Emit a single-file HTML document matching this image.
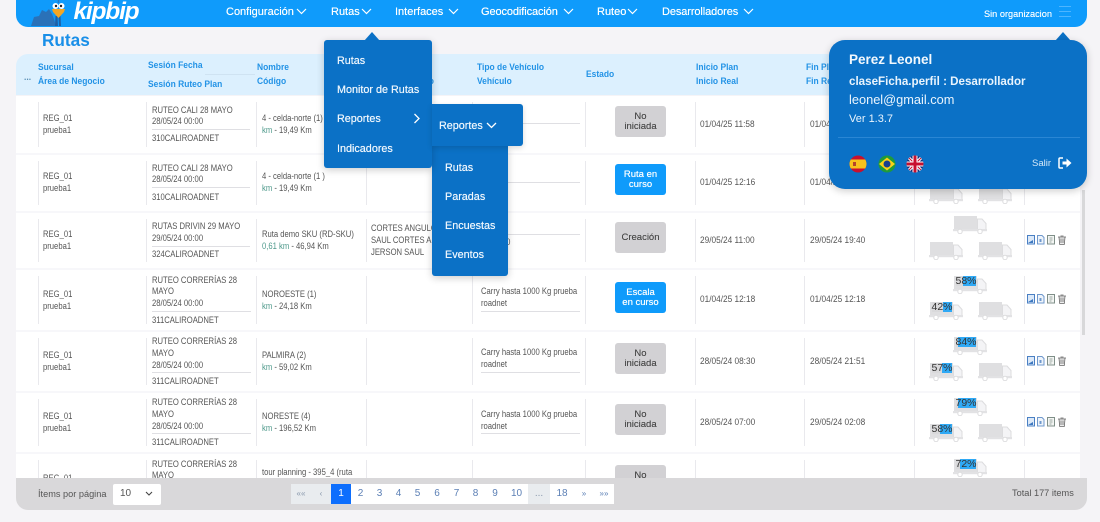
<!DOCTYPE html>
<html lang="es"><head><meta charset="utf-8"><title>Rutas</title>
<style>
*{box-sizing:border-box}
html,body{margin:0;padding:0;width:1100px;height:522px;overflow:hidden;background:#f5f4f7}
body{font-family:"Liberation Sans",sans-serif;position:relative;filter:blur(.35px)}
.t{position:absolute;white-space:nowrap;line-height:12px}
.h{font-size:9px;font-weight:bold;color:#2393e6;transform:scaleX(.94);transform-origin:left center}
.c{font-size:8.8px;color:#555;transform:scaleX(.87);transform-origin:left center}
.d{transform:scaleX(.94)}
.g{color:#4f9a8c}
.row{position:absolute;left:16px;width:1064px;background-color:#fff;background-repeat:no-repeat;
background-image:linear-gradient(#e9e9ed,#e9e9ed),linear-gradient(#e9e9ed,#e9e9ed),linear-gradient(#e9e9ed,#e9e9ed),linear-gradient(#e9e9ed,#e9e9ed),linear-gradient(#e9e9ed,#e9e9ed),linear-gradient(#e9e9ed,#e9e9ed),linear-gradient(#e9e9ed,#e9e9ed),linear-gradient(#e9e9ed,#e9e9ed),linear-gradient(#e9e9ed,#e9e9ed),linear-gradient(#e9e9ed,#e9e9ed);
background-position:22px 6px,130px 6px,240px 6px,350px 6px,456px 6px,569px 6px,679px 6px,788px 6px,898px 6px,1008px 6px;
background-size:1px calc(100% - 12px)}
.gap{position:absolute;left:16px;width:1064px;height:2px;background:#f7f7fa}
.ln{position:absolute;height:1px;background:#dfdfe3}
.b{position:absolute;left:615px;width:51px;height:31px;border-radius:3px;font-size:9.5px;line-height:9.500px;text-align:center;display:flex;align-items:center;justify-content:center}
.gy{background:#d2d1d4;color:#4a4a4a;text-shadow:0 0 .3px #555}
.bl{background:#0f9bfb;color:#fff;text-shadow:0 0 .5px #fff}
.nav{position:absolute;top:6px;font-size:11px;line-height:12px;color:#fff;white-space:nowrap;text-shadow:0 0 .4px #fff}
.chev{position:absolute;width:12px;height:8px}
.m{position:absolute;font-size:10.8px;line-height:14px;color:#eef6fd;white-space:nowrap;text-shadow:0 0 .5px #fff}
.pn{position:absolute;top:484px;height:20px;background:#fff;color:#5b7fb5;font-size:10px;line-height:20px;text-align:center}
.bar{position:absolute;height:10px;background:#d9d9db}
.bar i{position:absolute;right:0;top:0;height:10px;background:#2fa9f5}
.bar b{position:absolute;left:-2px;right:-2px;top:0;text-align:center;font-size:10.500px;line-height:10px;font-weight:normal;color:#333}
svg{position:absolute}
.tr{width:34px;height:18px}
</style></head><body>
<svg width="0" height="0" style="position:absolute"><defs>
<symbol id="truck" viewBox="0 0 34 18"><rect x="1" y="0" width="23" height="13" fill="#dfdfe1"/><path d="M24.500 3h4.500l4 4.500v6h-8.500z" fill="#f4f4f6" stroke="#dcdcde"/><rect x="0" y="13" width="34" height="2.200" fill="#e2e2e4"/><circle cx="7" cy="15.500" r="2.200" fill="#fff" stroke="#dcdcde"/><circle cx="27" cy="15.500" r="2.200" fill="#fff" stroke="#dcdcde"/></symbol>
<symbol id="ico" viewBox="0 0 40 10"><rect x="1.500" y=".5" width="7" height="8.500" fill="#dce9f8" stroke="#4a80c4"/><path d="M2 8l5-3v3z" fill="#3d78c0"/><path d="M11.500.5h4.500l2 2v6.500h-6.500z" fill="#eef4fb" stroke="#6f98cc"/><rect x="13.500" y="4" width="2" height="3" fill="#6f98cc"/><rect x="21.500" y=".5" width="7" height="8.500" fill="#f3f5f3" stroke="#7f8f88"/><path d="M23.500 3h3M23.500 5h3M23.500 7h2" stroke="#7f8f88" stroke-width=".7"/><path d="M32 2h8M33 2l.7 7.500h4.600l.7-7.500M34.500 1h3M35 3.500v4.500M37 3.500v4.500" fill="#eee" stroke="#666" stroke-width=".8"/></symbol>
</defs></svg>

<!-- table header -->
<div style="position:absolute;left:16px;top:54px;width:1066px;height:41px;background:#dcf0fe;border-top-left-radius:12px"></div>
<div class="t" style="left:42px;top:30px;font-size:17.200px;line-height:20px;font-weight:bold;color:#1a8fe8">Rutas</div>
<div class="t h" style="left:24px;top:71px;color:#5a8fb5">...</div>
<div class="t h" style="left:38px;top:61px">Sucursal</div>
<div class="t h" style="left:38px;top:75px">Área de Negocio</div>
<div class="t h" style="left:148px;top:59px">Sesión Fecha</div>
<div class="ln" style="left:205px;top:74px;width:50px;background:#cfe3f2"></div>
<div class="t h" style="left:148px;top:78px">Sesión Ruteo Plan</div>
<div class="t h" style="left:257px;top:61px">Nombre</div>
<div class="t h" style="left:257px;top:75px">Código</div>
<div class="t h" style="left:402px;top:75px">Técnico</div>
<div class="t h" style="left:477px;top:61px">Tipo de Vehículo</div>
<div class="t h" style="left:477px;top:75px">Vehículo</div>
<div class="t h" style="left:586px;top:68px">Estado</div>
<div class="t h" style="left:696px;top:61px">Inicio Plan</div>
<div class="t h" style="left:696px;top:75px">Inicio Real</div>
<div class="t h" style="left:806px;top:61px">Fin Plan</div>
<div class="t h" style="left:806px;top:75px">Fin Real</div>

<!-- rows -->
<div class="row" style="top:96px;height:57px"></div><div class="gap" style="top:153px"></div>
<div class="row" style="top:155px;height:56px"></div><div class="gap" style="top:211px"></div>
<div class="row" style="top:213px;height:55px"></div><div class="gap" style="top:268px"></div>
<div class="row" style="top:270px;height:60px"></div><div class="gap" style="top:330px"></div>
<div class="row" style="top:332px;height:59px"></div><div class="gap" style="top:391px"></div>
<div class="row" style="top:393px;height:59px"></div><div class="gap" style="top:452px"></div>
<div class="row" style="top:454px;height:30px"></div>
<div style="position:absolute;left:1082px;top:190px;width:3px;height:145px;background:#d8d8da"></div>

<!-- row 1 -->
<div class="t c" style="left:43px;top:112px">REG_01</div><div class="t c" style="left:43px;top:124px">prueba1</div>
<div class="t c" style="left:152px;top:104px">RUTEO CALI 28 MAYO</div><div class="t c" style="left:152px;top:115px">28/05/24 00:00</div>
<div class="ln" style="left:152px;top:129px;width:98px"></div><div class="t c" style="left:152px;top:132px">310CALIROADNET</div>
<div class="t c" style="left:262px;top:112px">4 - celda-norte (1)</div><div class="t c" style="left:262px;top:124px"><span class="g">km</span> - 19,49 Km</div>
<div class="ln" style="left:481px;top:123px;width:99px"></div>
<div class="b gy" style="top:106px">No<br>iniciada</div>
<div class="t c d" style="left:700px;top:118px">01/04/25 11:58</div><div class="t c d" style="left:810px;top:118px">01/04/25 12:10</div>

<!-- row 2 -->
<div class="t c" style="left:43px;top:170px">REG_01</div><div class="t c" style="left:43px;top:182px">prueba1</div>
<div class="t c" style="left:152px;top:162px">RUTEO CALI 28 MAYO</div><div class="t c" style="left:152px;top:173px">28/05/24 00:00</div>
<div class="ln" style="left:152px;top:187px;width:98px"></div><div class="t c" style="left:152px;top:191px">310CALIROADNET</div>
<div class="t c" style="left:262px;top:170px">4 - celda-norte (1 )</div><div class="t c" style="left:262px;top:182px"><span class="g">km</span> - 19,49 Km</div>
<div class="ln" style="left:481px;top:182px;width:99px"></div>
<div class="b bl" style="top:164px">Ruta en<br>curso</div>
<div class="t c d" style="left:700px;top:176px">01/04/25 12:16</div><div class="t c d" style="left:810px;top:176px">01/04/25 12:30</div>
<svg class="tr" style="left:929px;top:186px"><use href="#truck"/></svg><svg class="tr" style="left:978px;top:186px"><use href="#truck"/></svg>

<!-- row 3 -->
<div class="t c" style="left:43px;top:228px">REG_01</div><div class="t c" style="left:43px;top:240px">prueba1</div>
<div class="t c" style="left:152px;top:220px">RUTAS DRIVIN 29 MAYO</div><div class="t c" style="left:152px;top:232px">29/05/24 00:00</div>
<div class="ln" style="left:152px;top:246px;width:98px"></div><div class="t c" style="left:152px;top:248px">324CALIROADNET</div>
<div class="t c" style="left:262px;top:228px">Ruta demo SKU (RD-SKU)</div><div class="t c" style="left:262px;top:240px"><span class="g">0,61 km</span> - 46,94 Km</div>
<div class="t c" style="left:371px;top:222px">CORTES ANGULO</div><div class="t c" style="left:371px;top:234px">SAUL CORTES ANGULO</div><div class="t c" style="left:371px;top:246px">JERSON SAUL</div>
<div class="ln" style="left:481px;top:234px;width:99px"></div><div class="t c" style="left:478px;top:236px">roadnet 0</div>
<div class="b gy" style="top:222px">Creación</div>
<div class="t c d" style="left:700px;top:234px">29/05/24 11:00</div><div class="t c d" style="left:810px;top:234px">29/05/24 19:40</div>
<svg class="tr" style="left:953px;top:216px"><use href="#truck"/></svg><svg class="tr" style="left:929px;top:242px"><use href="#truck"/></svg><svg class="tr" style="left:978px;top:242px"><use href="#truck"/></svg>
<svg style="left:1026px;top:235px" width="40" height="10"><use href="#ico"/></svg>

<!-- row 4 -->
<div class="t c" style="left:43px;top:288px">REG_01</div><div class="t c" style="left:43px;top:300px">prueba1</div>
<div class="t c" style="left:152px;top:274px">RUTEO CORRERÍAS 28</div><div class="t c" style="left:152px;top:285px">MAYO</div><div class="t c" style="left:152px;top:297px">28/05/24 00:00</div>
<div class="ln" style="left:152px;top:311px;width:99px"></div><div class="t c" style="left:152px;top:314px">311CALIROADNET</div>
<div class="t c" style="left:262px;top:288px">NOROESTE (1)</div><div class="t c" style="left:262px;top:300px"><span class="g">km</span> - 24,18 Km</div>
<div class="t c" style="left:481px;top:285px">Carry hasta 1000 Kg prueba</div><div class="t c" style="left:481px;top:297px">roadnet</div><div class="ln" style="left:481px;top:311px;width:99px"></div>
<div class="b bl" style="top:282px">Escala<br>en curso</div>
<div class="t c d" style="left:700px;top:293px">01/04/25 12:18</div><div class="t c d" style="left:810px;top:293px">01/04/25 12:18</div>
<svg class="tr" style="left:953px;top:276px"><use href="#truck"/></svg><svg class="tr" style="left:929px;top:302px"><use href="#truck"/></svg><svg class="tr" style="left:978px;top:302px"><use href="#truck"/></svg>
<div class="bar" style="left:956px;top:276px;width:20px"><i style="width:13px"></i><b>58%</b></div>
<div class="bar" style="left:932px;top:302px;width:20px"><i style="width:9px"></i><b>42%</b></div>
<svg style="left:1026px;top:294px" width="40" height="10"><use href="#ico"/></svg>

<!-- row 5 -->
<div class="t c" style="left:43px;top:349px">REG_01</div><div class="t c" style="left:43px;top:361px">prueba1</div>
<div class="t c" style="left:152px;top:335px">RUTEO CORRERÍAS 28</div><div class="t c" style="left:152px;top:347px">MAYO</div><div class="t c" style="left:152px;top:359px">28/05/24 00:00</div>
<div class="ln" style="left:152px;top:372px;width:99px"></div><div class="t c" style="left:152px;top:375px">311CALIROADNET</div>
<div class="t c" style="left:262px;top:349px">PALMIRA (2)</div><div class="t c" style="left:262px;top:361px"><span class="g">km</span> - 59,02 Km</div>
<div class="t c" style="left:481px;top:346px">Carry hasta 1000 Kg prueba</div><div class="t c" style="left:481px;top:358px">roadnet</div><div class="ln" style="left:481px;top:372px;width:99px"></div>
<div class="b gy" style="top:343px">No<br>iniciada</div>
<div class="t c d" style="left:700px;top:355px">28/05/24 08:30</div><div class="t c d" style="left:810px;top:355px">28/05/24 21:51</div>
<svg class="tr" style="left:953px;top:337px"><use href="#truck"/></svg><svg class="tr" style="left:929px;top:363px"><use href="#truck"/></svg><svg class="tr" style="left:978px;top:363px"><use href="#truck"/></svg>
<div class="bar" style="left:956px;top:337px;width:20px"><i style="width:18px"></i><b>84%</b></div>
<div class="bar" style="left:932px;top:363px;width:20px"><i style="width:10px"></i><b>57%</b></div>
<svg style="left:1026px;top:356px" width="40" height="10"><use href="#ico"/></svg>

<!-- row 6 -->
<div class="t c" style="left:43px;top:410px">REG_01</div><div class="t c" style="left:43px;top:422px">prueba1</div>
<div class="t c" style="left:152px;top:396px">RUTEO CORRERÍAS 28</div><div class="t c" style="left:152px;top:408px">MAYO</div><div class="t c" style="left:152px;top:420px">28/05/24 00:00</div>
<div class="ln" style="left:152px;top:433px;width:99px"></div><div class="t c" style="left:152px;top:436px">311CALIROADNET</div>
<div class="t c" style="left:262px;top:410px">NORESTE (4)</div><div class="t c" style="left:262px;top:422px"><span class="g">km</span> - 196,52 Km</div>
<div class="t c" style="left:481px;top:408px">Carry hasta 1000 Kg prueba</div><div class="t c" style="left:481px;top:420px">roadnet</div><div class="ln" style="left:481px;top:433px;width:99px"></div>
<div class="b gy" style="top:404px">No<br>iniciada</div>
<div class="t c d" style="left:700px;top:416px">28/05/24 07:00</div><div class="t c d" style="left:810px;top:416px">29/05/24 02:08</div>
<svg class="tr" style="left:953px;top:398px"><use href="#truck"/></svg><svg class="tr" style="left:929px;top:424px"><use href="#truck"/></svg><svg class="tr" style="left:978px;top:424px"><use href="#truck"/></svg>
<div class="bar" style="left:956px;top:398px;width:20px"><i style="width:18px"></i><b>79%</b></div>
<div class="bar" style="left:932px;top:424px;width:20px"><i style="width:12px"></i><b>58%</b></div>
<svg style="left:1026px;top:417px" width="40" height="10"><use href="#ico"/></svg>

<!-- row 7 -->
<div class="t c" style="left:43px;top:472px">REG_01</div>
<div class="t c" style="left:152px;top:458px">RUTEO CORRERÍAS 28</div><div class="t c" style="left:152px;top:469px">MAYO</div>
<div class="t c" style="left:262px;top:466px">tour planning - 395_4 (ruta</div>
<div class="b gy" style="top:465px">No<br>iniciada</div>
<svg class="tr" style="left:953px;top:459px"><use href="#truck"/></svg>
<div class="bar" style="left:956px;top:459px;width:20px"><i style="width:16px"></i><b>72%</b></div>

<!-- footer -->
<div style="position:absolute;left:16px;top:478px;width:1071px;height:32px;background:#d9d8da;border-radius:0 0 12px 12px"></div>
<div class="t" style="left:38px;top:488px;font-size:9.200px;color:#555">Ítems por página</div>
<div style="position:absolute;left:113px;top:484px;width:48px;height:21px;background:#fff;border-radius:2px"></div>
<div class="t" style="left:120px;top:488px;font-size:10px;color:#555">10</div>
<svg style="left:145px;top:491px" width="8" height="6"><path d="M1 1l3 3 3-3" fill="none" stroke="#444" stroke-width="1.100"/></svg>
<div class="pn" style="left:291px;width:20px;background:#e9ecef;color:#8a99ad;font-size:8px">««</div>
<div class="pn" style="left:311px;width:20px;background:#e9ecef;color:#8a99ad;font-size:8px">‹</div>
<div class="pn" style="left:331px;width:20px;background:#0d6efd;color:#fff">1</div>
<div class="pn" style="left:351px;width:19px">2</div>
<div class="pn" style="left:370px;width:19px">3</div>
<div class="pn" style="left:389px;width:19px">4</div>
<div class="pn" style="left:408px;width:19px">5</div>
<div class="pn" style="left:427px;width:20px">6</div>
<div class="pn" style="left:447px;width:19px">7</div>
<div class="pn" style="left:466px;width:19px">8</div>
<div class="pn" style="left:485px;width:20px">9</div>
<div class="pn" style="left:505px;width:23px">10</div>
<div class="pn" style="left:528px;width:22px;background:#e9ecef;color:#8a99ad">...</div>
<div class="pn" style="left:550px;width:24px">18</div>
<div class="pn" style="left:574px;width:20px;font-size:8px">»</div>
<div class="pn" style="left:594px;width:20px;font-size:8px">»»</div>
<div class="t" style="left:1012px;top:487px;font-size:9.200px;color:#555">Total 177 items</div>

<!-- top bar -->
<div style="position:absolute;left:16px;top:0;width:1071px;height:26.500px;background:#0f9bfb;border-radius:0 0 12px 12px"></div>
<svg style="left:28px;top:0" width="42" height="27" viewBox="0 0 42 27">
<path d="M3 26l3-9 5-1 3-6 4 2 3-3 3 5 2 5 2 7z" fill="#2a71b8"/>
<path d="M27 26l.5-10h2l.5 10zM31 26l-.5-10h2l.5 10z" fill="#1d5fa6"/>
<path d="M30.500 0v3" stroke="#2a76c0" stroke-width="1.500"/>
<circle cx="27.500" cy="6" r="3" fill="#fff"/><circle cx="33.500" cy="6" r="3" fill="#fff"/>
<circle cx="28" cy="6" r="1.200" fill="#222"/><circle cx="33" cy="6" r="1.200" fill="#222"/>
<path d="M24 9h13l-1 3-5.500 6L25 12z" fill="#f5a623"/>
</svg>
<div class="t" style="left:73.500px;top:-1px;font-size:24.500px;line-height:26px;font-weight:bold;font-style:italic;color:#fff;letter-spacing:-1.200px">kipbip</div>

<div class="nav" style="left:226px">Configuración</div>
<svg class="chev" style="left:296px;top:8px"><path d="M1 1l4.500 4.500L10 1" fill="none" stroke="#fff" stroke-width="1.200"/></svg>
<div class="nav" style="left:331px">Rutas</div>
<svg class="chev" style="left:361px;top:8px"><path d="M1 1l4.500 4.500L10 1" fill="none" stroke="#fff" stroke-width="1.200"/></svg>
<div class="nav" style="left:395px">Interfaces</div>
<svg class="chev" style="left:448px;top:8px"><path d="M1 1l4.500 4.500L10 1" fill="none" stroke="#fff" stroke-width="1.200"/></svg>
<div class="nav" style="left:481px;letter-spacing:-.1px">Geocodificación</div>
<svg class="chev" style="left:563px;top:8px"><path d="M1 1l4.500 4.500L10 1" fill="none" stroke="#fff" stroke-width="1.200"/></svg>
<div class="nav" style="left:597px">Ruteo</div>
<svg class="chev" style="left:627px;top:8px"><path d="M1 1l4.500 4.500L10 1" fill="none" stroke="#fff" stroke-width="1.200"/></svg>
<div class="nav" style="left:662px;letter-spacing:-.1px">Desarrolladores</div>
<svg class="chev" style="left:743px;top:8px"><path d="M1 1l4.500 4.500L10 1" fill="none" stroke="#fff" stroke-width="1.200"/></svg>
<div class="t" style="left:984px;top:8px;font-size:9.200px;color:#fff;text-shadow:0 0 .3px #fff">Sin organizacion</div>
<div style="position:absolute;left:1059px;top:6px;width:12px;height:1px;background:#4db5ff"></div>
<div style="position:absolute;left:1059px;top:11px;width:12px;height:1px;background:#4db5ff"></div>
<div style="position:absolute;left:1059px;top:16px;width:12px;height:1px;background:#4db5ff"></div>

<!-- Rutas menu -->
<div style="position:absolute;left:432px;top:146px;width:76px;height:130px;background:#0b71c6;border-radius:0 0 3px 3px;box-shadow:0 2px 8px rgba(0,0,0,.2)"></div>
<div style="position:absolute;left:324px;top:40px;width:108px;height:128px;background:#0b71c6;border-radius:3px;box-shadow:0 2px 8px rgba(0,0,0,.2)"></div>
<div style="position:absolute;left:432px;top:104px;width:91px;height:42px;background:#0b71c6;border-radius:0 3px 3px 0;box-shadow:0 2px 6px rgba(0,0,0,.15)"></div>
<svg style="left:364px;top:32px" width="16" height="9"><path d="M0 9L8 0l8 9z" fill="#0b71c6"/></svg>
<div class="m" style="left:337px;top:54px">Rutas</div>
<div class="m" style="left:337px;top:83px">Monitor de Rutas</div>
<div class="m" style="left:337px;top:112px">Reportes</div>
<svg style="left:413px;top:113px" width="8" height="11"><path d="M1.500 1l4.500 4.500L1.500 10" fill="none" stroke="#fff" stroke-width="1.300"/></svg>
<div class="m" style="left:337px;top:142px">Indicadores</div>
<div class="m" style="left:439px;top:119px">Reportes</div>
<svg style="left:486px;top:122px" width="12" height="8"><path d="M1 1l4.500 4.500L10 1" fill="none" stroke="#fff" stroke-width="1.300"/></svg>
<div class="m" style="left:445px;top:161px">Rutas</div>
<div class="m" style="left:445px;top:190px">Paradas</div>
<div class="m" style="left:445px;top:219px">Encuestas</div>
<div class="m" style="left:445px;top:248px">Eventos</div>

<!-- profile -->
<svg style="left:1055px;top:32px" width="16" height="9"><path d="M0 9L8 0l8 9z" fill="#0b71c6"/></svg>
<div style="position:absolute;left:829px;top:40px;width:258px;height:149px;background:#0b71c6;border-radius:16px;box-shadow:0 2px 8px rgba(0,0,0,.2)"></div>
<div class="t" style="left:849px;top:52px;font-size:13.500px;line-height:16px;font-weight:bold;color:#f2f8fd">Perez Leonel</div>
<div class="t" style="left:849px;top:75px;font-size:11.600px;line-height:14px;font-weight:bold;color:#e9f4fd">claseFicha.perfil : Desarrollador</div>
<div class="t" style="left:849px;top:93px;font-size:12.800px;line-height:14px;color:#e9f4fd">leonel@gmail.com</div>
<div class="t" style="left:849px;top:112px;font-size:11px;line-height:14px;color:#e9f4fd">Ver 1.3.7</div>
<div style="position:absolute;left:838px;top:137px;width:242px;height:1px;background:#2a86d4"></div>
<svg style="left:849px;top:155px" width="18" height="18" viewBox="0 0 18 18"><clipPath id="c1"><circle cx="9" cy="9" r="8.500"/></clipPath><g clip-path="url(#c1)"><rect width="18" height="18" fill="#c8102e"/><rect y="4.500" width="18" height="9" fill="#f8c21c"/><rect x="4" y="7" width="3" height="4" fill="#b5452a"/></g></svg>
<svg style="left:878px;top:155px" width="18" height="18" viewBox="0 0 18 18"><clipPath id="c2"><circle cx="9" cy="9" r="8.500"/></clipPath><g clip-path="url(#c2)"><rect width="18" height="18" fill="#1f9a3c"/><path d="M9 2.500L17 9l-8 6.500L1 9z" fill="#fbd116"/><circle cx="9" cy="9" r="3.500" fill="#1a3f8f"/></g></svg>
<svg style="left:906px;top:155px" width="18" height="18" viewBox="0 0 18 18"><clipPath id="c3"><circle cx="9" cy="9" r="8.500"/></clipPath><g clip-path="url(#c3)"><rect width="18" height="18" fill="#1d2f78"/><path d="M0 0l18 18M18 0L0 18" stroke="#fff" stroke-width="3"/><path d="M0 0l18 18M18 0L0 18" stroke="#c8102e" stroke-width="1"/><path d="M9 0v18M0 9h18" stroke="#fff" stroke-width="5"/><path d="M9 0v18M0 9h18" stroke="#c8102e" stroke-width="3"/></g></svg>
<div class="t" style="left:1032px;top:158px;font-size:9.500px;color:#d6e9f9">Salir</div>
<svg style="left:1058px;top:157px" width="14" height="12" viewBox="0 0 14 12"><path d="M5 1H2a1 1 0 0 0-1 1v8a1 1 0 0 0 1 1h3" fill="none" stroke="#fff" stroke-width="1.500"/><path d="M4.500 4.500H8.500V1.500L13.500 6l-5 4.500v-3H4.500z" fill="#fff"/></svg>
</body></html>
